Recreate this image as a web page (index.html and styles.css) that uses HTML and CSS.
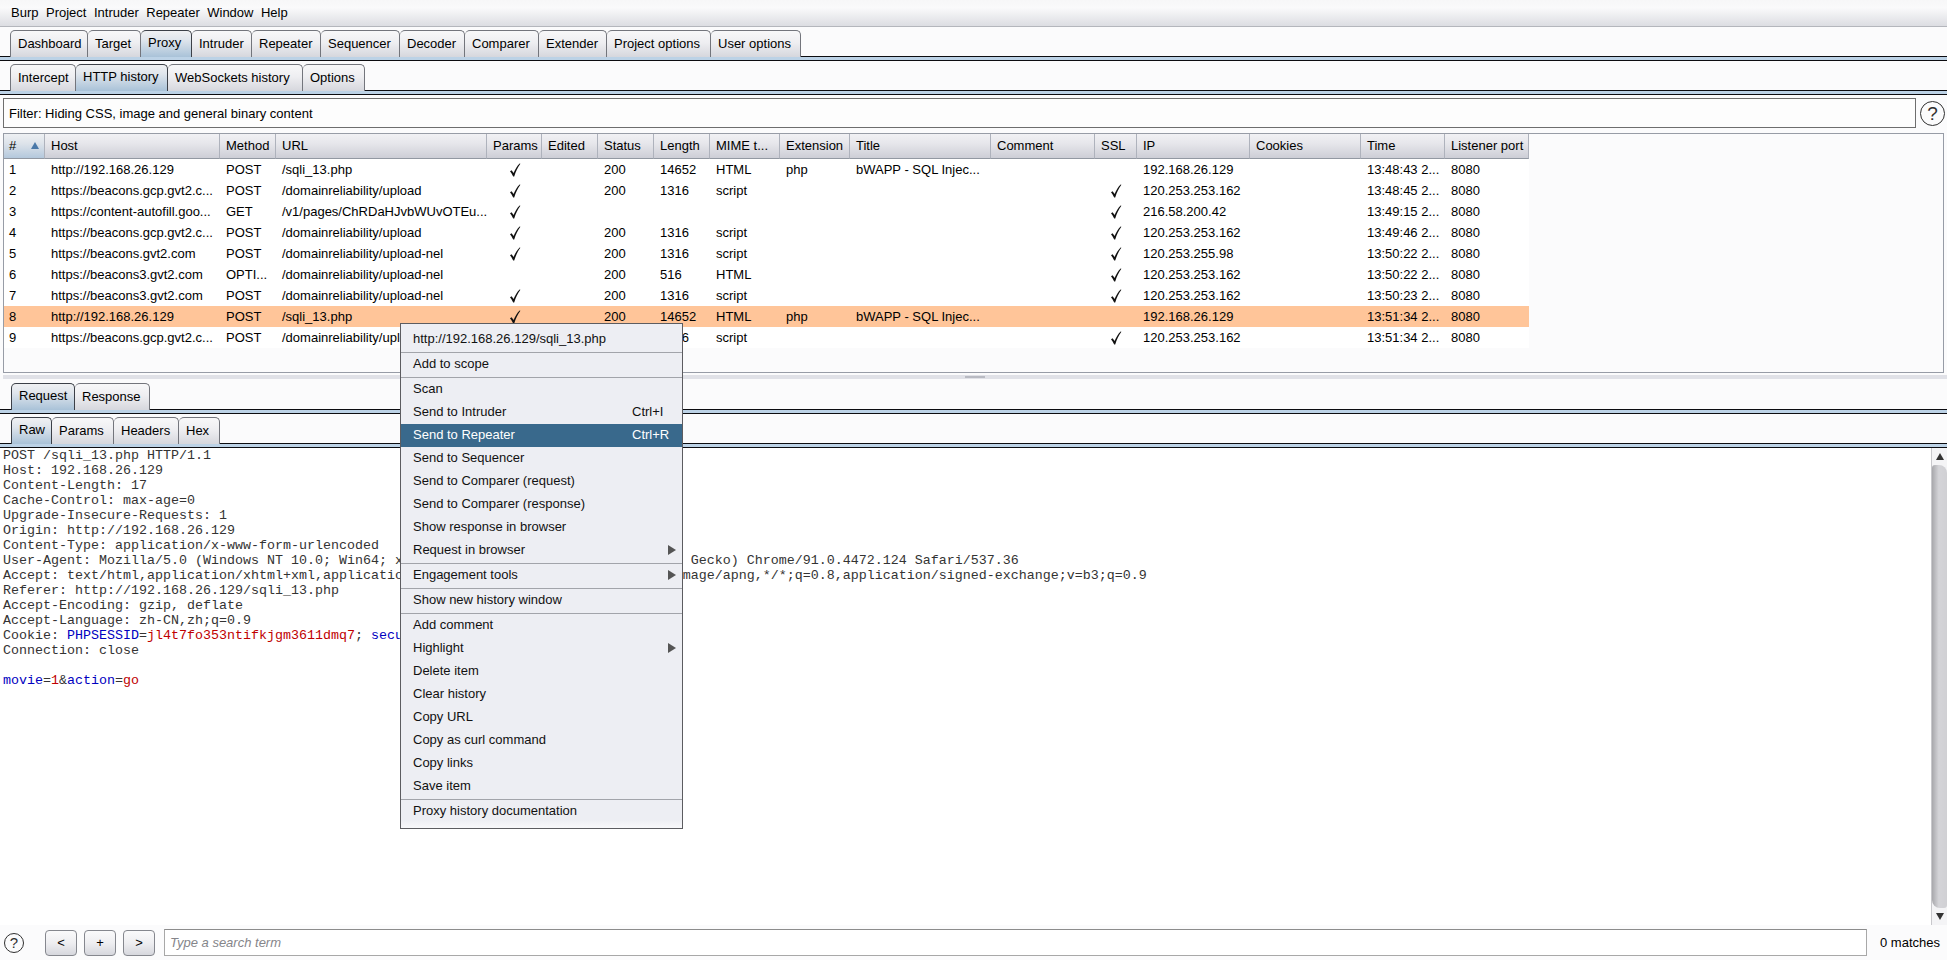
FILE: index.html
```html
<!DOCTYPE html>
<html lang="en">
<head>
<meta charset="utf-8">
<title>Burp Suite</title>
<link rel="stylesheet" href="styles.css">
</head>
<body>
<svg class="defs" width="0" height="0" aria-hidden="true"><symbol id="chk" viewBox="0 0 12 14"><path d="M1 8.2 L2.6 7.2 L4.6 10 C6 6.4 8 3 10.6 0.4 L11.4 0.8 C8.8 4.2 6.8 8.4 5.2 13.6 L4.2 13.6 C3.4 11.6 2.2 9.6 1 8.2 Z"/></symbol></svg>

<nav class="menubar"><span>Burp</span><span>Project</span><span>Intruder</span><span>Repeater</span><span>Window</span><span>Help</span></nav>

<div class="tabs tabs-main">
  <div class="tab">Dashboard</div><div class="tab">Target</div><div class="tab on">Proxy</div><div class="tab">Intruder</div><div class="tab">Repeater</div><div class="tab">Sequencer</div><div class="tab">Decoder</div><div class="tab">Comparer</div><div class="tab">Extender</div><div class="tab">Project options</div><div class="tab">User options</div>
</div>
<div class="bar"></div>

<div class="tabs tabs-sub">
  <div class="tab">Intercept</div><div class="tab on">HTTP history</div><div class="tab">WebSockets history</div><div class="tab">Options</div>
</div>
<div class="bar"></div>

<div class="filter-row">
  <div class="filter">Filter: Hiding CSS, image and general binary content</div>
  <div class="help help-lg">?</div>
</div>

<section class="table">
  <div class="thead">
    <div class="th sorted"><span>#</span><i class="sort"></i></div><div class="th">Host</div><div class="th">Method</div><div class="th">URL</div><div class="th">Params</div><div class="th">Edited</div><div class="th">Status</div><div class="th">Length</div><div class="th">MIME t...</div><div class="th">Extension</div><div class="th">Title</div><div class="th">Comment</div><div class="th">SSL</div><div class="th">IP</div><div class="th">Cookies</div><div class="th">Time</div><div class="th">Listener port</div>
  </div>
  <div class="tr"><div class="td first">1</div><div class="td">http://192.168.26.129</div><div class="td">POST</div><div class="td">/sqli_13.php</div><div class="td c"><svg class="chk"><use href="#chk"/></svg></div><div class="td"></div><div class="td">200</div><div class="td">14652</div><div class="td">HTML</div><div class="td">php</div><div class="td">bWAPP - SQL Injec...</div><div class="td"></div><div class="td c"></div><div class="td">192.168.26.129</div><div class="td"></div><div class="td">13:48:43 2...</div><div class="td">8080</div></div>
  <div class="tr"><div class="td first">2</div><div class="td">https://beacons.gcp.gvt2.c...</div><div class="td">POST</div><div class="td">/domainreliability/upload</div><div class="td c"><svg class="chk"><use href="#chk"/></svg></div><div class="td"></div><div class="td">200</div><div class="td">1316</div><div class="td">script</div><div class="td"></div><div class="td"></div><div class="td"></div><div class="td c"><svg class="chk"><use href="#chk"/></svg></div><div class="td">120.253.253.162</div><div class="td"></div><div class="td">13:48:45 2...</div><div class="td">8080</div></div>
  <div class="tr"><div class="td first">3</div><div class="td">https://content-autofill.goo...</div><div class="td">GET</div><div class="td">/v1/pages/ChRDaHJvbWUvOTEu...</div><div class="td c"><svg class="chk"><use href="#chk"/></svg></div><div class="td"></div><div class="td"></div><div class="td"></div><div class="td"></div><div class="td"></div><div class="td"></div><div class="td"></div><div class="td c"><svg class="chk"><use href="#chk"/></svg></div><div class="td">216.58.200.42</div><div class="td"></div><div class="td">13:49:15 2...</div><div class="td">8080</div></div>
  <div class="tr"><div class="td first">4</div><div class="td">https://beacons.gcp.gvt2.c...</div><div class="td">POST</div><div class="td">/domainreliability/upload</div><div class="td c"><svg class="chk"><use href="#chk"/></svg></div><div class="td"></div><div class="td">200</div><div class="td">1316</div><div class="td">script</div><div class="td"></div><div class="td"></div><div class="td"></div><div class="td c"><svg class="chk"><use href="#chk"/></svg></div><div class="td">120.253.253.162</div><div class="td"></div><div class="td">13:49:46 2...</div><div class="td">8080</div></div>
  <div class="tr"><div class="td first">5</div><div class="td">https://beacons.gvt2.com</div><div class="td">POST</div><div class="td">/domainreliability/upload-nel</div><div class="td c"><svg class="chk"><use href="#chk"/></svg></div><div class="td"></div><div class="td">200</div><div class="td">1316</div><div class="td">script</div><div class="td"></div><div class="td"></div><div class="td"></div><div class="td c"><svg class="chk"><use href="#chk"/></svg></div><div class="td">120.253.255.98</div><div class="td"></div><div class="td">13:50:22 2...</div><div class="td">8080</div></div>
  <div class="tr"><div class="td first">6</div><div class="td">https://beacons3.gvt2.com</div><div class="td">OPTI...</div><div class="td">/domainreliability/upload-nel</div><div class="td c"></div><div class="td"></div><div class="td">200</div><div class="td">516</div><div class="td">HTML</div><div class="td"></div><div class="td"></div><div class="td"></div><div class="td c"><svg class="chk"><use href="#chk"/></svg></div><div class="td">120.253.253.162</div><div class="td"></div><div class="td">13:50:22 2...</div><div class="td">8080</div></div>
  <div class="tr"><div class="td first">7</div><div class="td">https://beacons3.gvt2.com</div><div class="td">POST</div><div class="td">/domainreliability/upload-nel</div><div class="td c"><svg class="chk"><use href="#chk"/></svg></div><div class="td"></div><div class="td">200</div><div class="td">1316</div><div class="td">script</div><div class="td"></div><div class="td"></div><div class="td"></div><div class="td c"><svg class="chk"><use href="#chk"/></svg></div><div class="td">120.253.253.162</div><div class="td"></div><div class="td">13:50:23 2...</div><div class="td">8080</div></div>
  <div class="tr hl"><div class="td first">8</div><div class="td">http://192.168.26.129</div><div class="td">POST</div><div class="td">/sqli_13.php</div><div class="td c"><svg class="chk"><use href="#chk"/></svg></div><div class="td"></div><div class="td">200</div><div class="td">14652</div><div class="td">HTML</div><div class="td">php</div><div class="td">bWAPP - SQL Injec...</div><div class="td"></div><div class="td c"></div><div class="td">192.168.26.129</div><div class="td"></div><div class="td">13:51:34 2...</div><div class="td">8080</div></div>
  <div class="tr"><div class="td first">9</div><div class="td">https://beacons.gcp.gvt2.c...</div><div class="td">POST</div><div class="td">/domainreliability/upload</div><div class="td c"><svg class="chk"><use href="#chk"/></svg></div><div class="td"></div><div class="td">200</div><div class="td">1316</div><div class="td">script</div><div class="td"></div><div class="td"></div><div class="td"></div><div class="td c"><svg class="chk"><use href="#chk"/></svg></div><div class="td">120.253.253.162</div><div class="td"></div><div class="td">13:51:34 2...</div><div class="td">8080</div></div>
</section>

<div class="splitter"><i></i></div>

<div class="tabs tabs-req">
  <div class="tab on">Request</div><div class="tab">Response</div>
</div>
<div class="bar"></div>
<div class="tabs tabs-raw">
  <div class="tab on">Raw</div><div class="tab">Params</div><div class="tab">Headers</div><div class="tab">Hex</div>
</div>
<div class="bar"></div>

<div class="editor">
<div class="code">
  <div class="ln">POST /sqli_13.php HTTP/1.1</div>
  <div class="ln">Host: 192.168.26.129</div>
  <div class="ln">Content-Length: 17</div>
  <div class="ln">Cache-Control: max-age=0</div>
  <div class="ln">Upgrade-Insecure-Requests: 1</div>
  <div class="ln">Origin: http://192.168.26.129</div>
  <div class="ln">Content-Type: application/x-www-form-urlencoded</div>
  <div class="ln">User-Agent: Mozilla/5.0 (Windows NT 10.0; Win64; x64) AppleWebKit/537.36 (KHTML, like Gecko) Chrome/91.0.4472.124 Safari/537.36</div>
  <div class="ln">Accept: text/html,application/xhtml+xml,application/xml;q=0.9,image/avif,image/webp,image/apng,*/*;q=0.8,application/signed-exchange;v=b3;q=0.9</div>
  <div class="ln">Referer: http://192.168.26.129/sqli_13.php</div>
  <div class="ln">Accept-Encoding: gzip, deflate</div>
  <div class="ln">Accept-Language: zh-CN,zh;q=0.9</div>
  <div class="ln"><span>Cookie: </span><span class="k">PHPSESSID</span><span>=</span><span class="v">jl4t7fo353ntifkjgm3611dmq7</span><span>; </span><span class="k">security_level</span><span>=</span><span class="v">0</span></div>
  <div class="ln">Connection: close</div>
  <div class="ln"></div>
  <div class="ln"><span class="k">movie</span><span>=</span><span class="v">1</span><span>&amp;</span><span class="k">action</span><span>=</span><span class="v">go</span></div>
</div>
<div class="scrollbar">
  <div class="sb-btn"><i class="up"></i></div>
  <div class="sb-thumb"></div>
  <div class="sb-btn"><i class="down"></i></div>
</div>
</div>

<footer class="search">
  <div class="help help-sm">?</div>
  <div class="btns"><button class="btn">&lt;</button><button class="btn">+</button><button class="btn">&gt;</button></div>
  <div class="input">Type a search term</div>
  <div class="matches">0 matches</div>
</footer>

<div class="ctx">
  <div class="it">http://192.168.26.129/sqli_13.php</div>
  <hr>
  <div class="it">Add to scope</div>
  <hr>
  <div class="it">Scan</div>
  <div class="it"><span>Send to Intruder</span><span class="key">Ctrl+I</span></div>
  <div class="it act"><span>Send to Repeater</span><span class="key">Ctrl+R</span></div>
  <div class="it">Send to Sequencer</div>
  <div class="it">Send to Comparer (request)</div>
  <div class="it">Send to Comparer (response)</div>
  <div class="it">Show response in browser</div>
  <div class="it"><span>Request in browser</span><i class="arrow"></i></div>
  <hr>
  <div class="it"><span>Engagement tools</span><i class="arrow"></i></div>
  <hr>
  <div class="it">Show new history window</div>
  <hr>
  <div class="it">Add comment</div>
  <div class="it"><span>Highlight</span><i class="arrow"></i></div>
  <div class="it">Delete item</div>
  <div class="it">Clear history</div>
  <div class="it">Copy URL</div>
  <div class="it">Copy as curl command</div>
  <div class="it">Copy links</div>
  <div class="it">Save item</div>
  <hr>
  <div class="it">Proxy history documentation</div>
</div>
</body>
</html>
```
FILE: styles.css
```css
* { box-sizing: border-box; }
html, body { margin: 0; padding: 0; }
body {
  position: relative;
  width: 1947px;
  height: 960px;
  overflow: hidden;
  background: #fbfbfc;
  color: #000;
  font: 13px/1 "Liberation Sans", Arial, sans-serif;
  display: flex;
  flex-direction: column;
}
.defs { position: absolute; }

.menubar {
  height: 27px;
  flex: none;
  display: flex;
  align-items: center;
  gap: 7.5px;
  padding: 0 0 2px 11px;
  background: linear-gradient(#f7f7f8, #fafafb 30%, #dcdde2);
  border-bottom: 1px solid #b4b6bc;
}

.tabs { display: grid; flex: none; height: 26px; position: relative; z-index: 1; justify-content: start; }
.tabs-main { margin-top: 3px; padding-left: 10px; grid-template-columns: 78px 53px 51px 60px 69px 79px 65px 74px 68px 104px 90px; }
.tabs-sub { margin-top: 3px; padding-left: 10px; grid-template-columns: 66px 92px 135px 62px; }
.tabs-req { margin-top: 4px; padding-left: 11px; grid-template-columns: 64px 75px; }
.tabs-raw { margin-top: 3px; padding-left: 11px; grid-template-columns: 41px 62px 65px 41px; }

.tab {
  display: flex;
  align-items: center;
  padding: 0 0 2px 7px;
  white-space: nowrap;
  overflow: hidden;
  border: 1px solid #73757c;
  border-bottom: 0;
  border-left-width: 0;
  border-radius: 5px 5px 0 0;
  background: linear-gradient(#f8f8f9, #eeeef1 45%, #d6d7dd);
}
.tab:first-child { border-left-width: 1px; }
.tab.on {
  height: 27px;
  padding-bottom: 3px;
  border-color: #3c4048;
  background: linear-gradient(#f0f1f3, #dfe5ec 35%, #a9c2d8);
}

.bar {
  flex: none;
  height: 5px;
  border-top: 1px solid #0c0c10;
  border-bottom: 1px solid #0c0c10;
  background: #bcd2e6;
}

.filter-row {
  flex: none;
  display: flex;
  align-items: center;
  margin-top: 3px;
  padding-left: 3px;
  gap: 4px;
}
.filter {
  width: 1913px;
  height: 30px;
  display: flex;
  align-items: center;
  padding-left: 5px;
  border: 1px solid #6e6e6e;
  background: #fdfdfd;
}
.help {
  display: flex;
  align-items: center;
  justify-content: center;
  flex: none;
  border-radius: 50%;
  border: 1.3px solid #303030;
  color: #303030;
}
.help-lg { width: 25px; height: 25px; font-size: 19px; }
.help-sm { width: 20px; height: 20px; font-size: 15px; }

.table {
  --cols: 41px 175px 56px 211px 55px 56px 56px 56px 70px 70px 141px 104px 42px 113px 111px 84px 84px;
  flex: none;
  width: 1941px;
  height: 240px;
  margin: 5px 0 0 3px;
  border: 1px solid #979ca6;
  background: #fbfbfc;
}
.thead, .tr { display: grid; grid-template-columns: var(--cols); width: 1525px; }
.thead { height: 25px; }
.th {
  display: flex;
  align-items: center;
  padding: 0 0 2px 6px;
  white-space: nowrap;
  overflow: hidden;
  border-right: 1px solid #aeb2bc;
  border-bottom: 1px solid #9298a2;
  background: linear-gradient(#f1f1f4, #e6e6eb 40%, #cdced6);
}
.th.sorted { background: linear-gradient(#eef0f3, #dde3ea 40%, #b4c8dc); justify-content: space-between; padding-left: 5px; padding-right: 5px; }
.sort { width: 0; height: 0; border: 4px solid transparent; border-top: 0; border-bottom: 7px solid #4a78a8; }
.tr { height: 21px; background: #fff; }
.tr.hl { background: #ffc599; }
.td {
  display: flex;
  align-items: center;
  padding-left: 6px;
  white-space: nowrap;
  overflow: hidden;
}
.td.first { padding-left: 5px; }
.td.c { justify-content: center; padding-left: 0; }
.chk { width: 12px; height: 14px; fill: #111; }

.splitter {
  flex: none;
  height: 4px;
  margin: 2px 0 0 3px;
  background: #e0e1e7;
  display: flex;
  justify-content: center;
  align-items: center;
}
.splitter i { width: 20px; height: 2px; background: #b8bac2; }

.editor {
  flex: none;
  height: 477px;
  display: flex;
  background: #fff;
}
.code {
  flex: 1;
  padding: 0 0 0 3px;
  overflow: hidden;
  font: 13.33px/15px "Liberation Mono", "Courier New", monospace;
  color: #333;
}
.ln { height: 15px; white-space: pre; }
.code .k { color: #0000c0; }
.code .v { color: #c00000; }

.scrollbar { width: 16px; flex: none; display: flex; flex-direction: column; border-left: 1px solid #c8c8cc; background: #f4f4f6; }
.sb-btn { flex: none; height: 17px; display: flex; align-items: center; justify-content: center; }
.sb-btn .up { width: 0; height: 0; border: 4px solid transparent; border-top: 0; border-bottom: 7px solid #333; }
.sb-btn .down { width: 0; height: 0; border: 4px solid transparent; border-bottom: 0; border-top: 7px solid #333; }
.sb-thumb {
  flex: 1;
  border-radius: 3px 8px 3px 8px;
  background: linear-gradient(90deg, #a8a8ac, #d4d4d8 45%, #d0d0d4);
}

.search {
  flex: 1;
  display: flex;
  align-items: center;
  padding-left: 4px;
}
.btns { display: flex; gap: 7px; margin-left: 21px; }
.btn {
  width: 32px;
  height: 26px;
  padding: 0;
  font: 13px "Liberation Sans", Arial, sans-serif;
  color: #000;
  border: 1px solid #85878e;
  border-radius: 4px;
  background: linear-gradient(#fafafb, #eeeef1 50%, #d6d7dd);
}
.input {
  flex: 1;
  height: 27px;
  margin-left: 9px;
  display: flex;
  align-items: center;
  padding-left: 5px;
  border: 1px solid #a8a8a8;
  border-top-color: #8c8c8c;
  background: #fff;
  color: #85858a;
  font-style: italic;
}
.matches { width: 80px; padding-left: 13px; white-space: nowrap; }

.ctx {
  position: absolute;
  left: 400px;
  top: 323px;
  width: 283px;
  height: 506px;
  z-index: 5;
  padding: 4px 0;
  border: 1px solid #5c5c60;
  background: linear-gradient(#edeef3 calc(100% - 8px), #f8f8fa);
  color: #111;
}
.ctx hr { height: 1px; margin: 1px 0 0; border: 0; background: #a2a4aa; }
.it {
  position: relative;
  height: 23px;
  display: flex;
  align-items: center;
  padding: 0 0 2px 12px;
  white-space: nowrap;
}
.it.act { background: #39698c; color: #fff; }
.key { position: absolute; left: 231px; }
.arrow {
  position: absolute;
  left: 267px;
  width: 0;
  height: 0;
  border: 5px solid transparent;
  border-right: 0;
  border-left: 8px solid #555;
}
```
